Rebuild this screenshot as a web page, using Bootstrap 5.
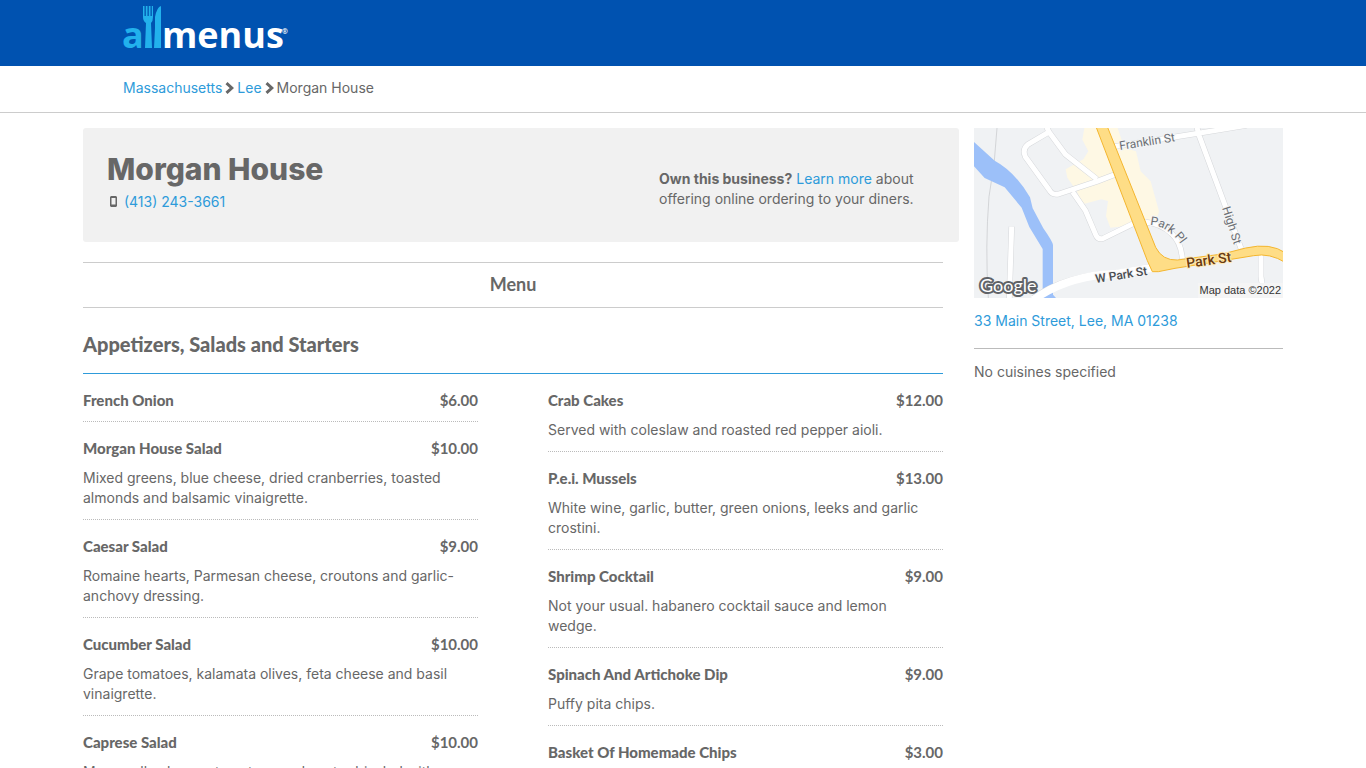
<!DOCTYPE html>
<html lang="en">
<head>
<meta charset="utf-8">
<meta name="viewport" content="width=device-width, initial-scale=1">
<title>Morgan House menu - Lee, MA</title>
<link href="https://cdn.jsdelivr.net/npm/bootstrap@5.3.0/dist/css/bootstrap.min.css" rel="stylesheet">
<style>
  body { font-family: Inter, "Noto Sans", sans-serif; font-size: 14px; line-height: 20px; color: #676767; overflow-x: hidden; }
  a { color: #2e9bda; text-decoration: none; }
  a:hover { text-decoration: underline; }
  .page-wrap { max-width: 1232px; padding: 0 16px; }
  .site-header { background: #0052b0; height: 66px; }
  .inset { padding-left: 40px; }
  .crumb-bar { border-bottom: 1px solid #ccc; padding: 12px 0 14px; }
  .crumb-bar ol { gap: 3px; }
  .page-cols { gap: 15px; padding-top: 15px; }
  .side-col { width: 309px; flex: none; }
  .map-link { margin-bottom: 13px; }
  .hero-box { background: #f1f1f1; border-radius: 3px; padding: 24px 40px 24px 24px; min-height: 114px; }
  .hero-box h1 { font-size: 30px; line-height: 34px; font-weight: 800; margin: 0 0 6px; }
  .owner-note { width: 260px; margin: 17px 0 0; }
  .menu-area { margin-right: 16px; }
  .menu-tab { border: solid #ccc; border-width: 1px 0; margin-top: 20px; height: 46px; font: 700 18px/42px Lato, sans-serif; }
  .section-title { font: 900 20px/28px Lato, sans-serif; margin: 0; padding: 22px 0 15px; border-bottom: 1px solid #2e9bda; }
  .dish-cols { --bs-gutter-x: 70px; }
  .dish { padding: 16px 0 11px; border-bottom: 1px dotted #bbb; }
  .dish h3, .dish .price { font: 900 15px/20px Lato, sans-serif; margin: 0; }
  .dish .price { font-weight: 700; }
  .dish p { margin: 10px 8px 0 0; }
  .side-col hr { margin: 17px 0 13px; border-color: #bbb; opacity: 1; }
</style>
</head>
<body>
<header class="site-header">
  <div class="container-fluid page-wrap">
    <a href="#" class="d-inline-block ms-4 ps-3" aria-label="allmenus home">
      <svg class="d-block" width="170" height="66" viewBox="0 0 170 66" font-family="Open Sans, Noto Sans, sans-serif" font-weight="700">
        <text x="-1" y="48" font-size="36" fill="#22b1ec">a</text>
        <path fill="#22b1ec" d="M20 6h1.500v10h1.300V6h1.700v10h1.300V6h1.700v10h1.300V6H30v11q0 4-2 6l1 25h-7l1-25q-3-2-3-6zM31 48l1-20V17q2-10 6-11v42z"/>
        <text x="39" y="48" font-size="36" fill="#fff">menus</text>
        <text x="159" y="34" font-size="7" fill="#fff">®</text>
      </svg>
    </a>
  </div>
</header>
<nav class="crumb-bar" aria-label="breadcrumb">
  <div class="container-fluid page-wrap">
    <ol class="list-unstyled d-flex align-items-center mb-0 inset">
      <li><a href="#">Massachusetts</a></li>
      <li><svg class="d-block" width="9" height="12" viewBox="0 0 9 12"><path d="M1.500 1.200 6.800 6 1.500 10.800" fill="none" stroke="#676767" stroke-width="3"/></svg></li>
      <li><a href="#">Lee</a></li>
      <li><svg class="d-block" width="9" height="12" viewBox="0 0 9 12"><path d="M1.500 1.200 6.800 6 1.500 10.800" fill="none" stroke="#676767" stroke-width="3"/></svg></li>
      <li>Morgan House</li>
    </ol>
  </div>
</nav>
<div class="container-fluid page-wrap d-flex page-cols">
  <main class="flex-grow-1">
    <section class="hero-box d-flex justify-content-between">
      <div>
        <h1>Morgan House</h1>
        <svg width="13" height="12" viewBox="0 0 13 12" class="align-baseline"><path fill="#676767" fill-rule="evenodd" d="M4 1h5l1 1v9l-1 1H4l-1-1V2zM4.500 3v6.500h4V3z"/></svg>
        <a href="tel:4132433661">(413) 243-3661</a>
      </div>
      <p class="owner-note"><strong class="fw-bold">Own this business?</strong> <a href="#">Learn more</a> about offering online ordering to your diners.</p>
    </section>
    <div class="menu-area">
      <h2 class="menu-tab text-center mb-0">Menu</h2>
      <h2 class="section-title">Appetizers, Salads and Starters</h2>
      <div class="row dish-cols">
        <div class="col-6">
          <article class="dish"><div class="d-flex justify-content-between"><h3>French Onion</h3><span class="price">$6.00</span></div></article>
          <article class="dish"><div class="d-flex justify-content-between"><h3>Morgan House Salad</h3><span class="price">$10.00</span></div><p>Mixed greens, blue cheese, dried cranberries, toasted almonds and balsamic vinaigrette.</p></article>
          <article class="dish"><div class="d-flex justify-content-between"><h3>Caesar Salad</h3><span class="price">$9.00</span></div><p>Romaine hearts, Parmesan cheese, croutons and garlic-anchovy dressing.</p></article>
          <article class="dish"><div class="d-flex justify-content-between"><h3>Cucumber Salad</h3><span class="price">$10.00</span></div><p>Grape tomatoes, kalamata olives, feta cheese and basil vinaigrette.</p></article>
          <article class="dish"><div class="d-flex justify-content-between"><h3>Caprese Salad</h3><span class="price">$10.00</span></div><p>Mozzarella cheese, tomatoes and pesto drizzled with balsamic reduction.</p></article>
        </div>
        <div class="col-6">
          <article class="dish"><div class="d-flex justify-content-between"><h3>Crab Cakes</h3><span class="price">$12.00</span></div><p>Served with coleslaw and roasted red pepper aioli.</p></article>
          <article class="dish"><div class="d-flex justify-content-between"><h3>P.e.i. Mussels</h3><span class="price">$13.00</span></div><p>White wine, garlic, butter, green onions, leeks and garlic crostini.</p></article>
          <article class="dish"><div class="d-flex justify-content-between"><h3>Shrimp Cocktail</h3><span class="price">$9.00</span></div><p>Not your usual. habanero cocktail sauce and lemon wedge.</p></article>
          <article class="dish"><div class="d-flex justify-content-between"><h3>Spinach And Artichoke Dip</h3><span class="price">$9.00</span></div><p>Puffy pita chips.</p></article>
          <article class="dish"><div class="d-flex justify-content-between"><h3>Basket Of Homemade Chips</h3><span class="price">$3.00</span></div></article>
        </div>
      </div>
    </div>
  </main>
  <aside class="side-col">
    <a href="#" class="d-block map-link" aria-label="Map of Morgan House">
      <svg class="d-block" width="309" height="170" viewBox="0 0 309 170" font-family="Roboto, sans-serif" font-size="12">
        <rect width="309" height="170" fill="#f0f2f4"/>
        <svg width="309" height="170" viewBox="12 24 927 510" fill="none" stroke-linejoin="round">
          <path fill="#fef8e4" d="M343 24h100l20 60 35 10 14 60 30 30 25 90-10 36-58 5-78 8-13-35 6-45-20-5-56 15-18-40-28-40-5-25 53-30 15-24-18-35z"/>
          <path stroke="#c4c6c9" stroke-width="2" d="M81 24 Q76 130 57 230 Q45 380 55 534"/>
          <path fill="#9cc0f9" d="M12 66l62 56q60 32 106 110l8 33 32 60q28 40 29 50v149l9 10h-40V387l-40-66-23-58-51-61-60-28-32-35z"/>
          <g stroke="#d5d7da" stroke-width="18">
            <path d="M225 10 237 36l-63 37q-18 15-8 37l72 100q8 16 28 12l115-38 58-22M237 36l49 67 94 74M308 216l38 55 32 75q6 14 22 9l98-48M430 80 685 40 830 16M680 16l5 24 128 345M525 306q50 5 80 35 28 25 32 75M873 400v70q3 25 14 64M125 320l-7 215M190 534q100-70 250-75l110-20"/>
          </g>
          <g stroke="#fff" stroke-width="15">
            <path d="M225 10 237 36l-63 37q-18 15-8 37l72 100q8 16 28 12l115-38 58-22M237 36l49 67 94 74M308 216l38 55 32 75q6 14 22 9l98-48M430 80 685 40 830 16M680 16l5 24 128 345M525 306q50 5 80 35 28 25 32 75M873 400v70q3 25 14 64M125 320l-7 215"/>
            <path stroke-width="24" d="M190 540q100-74 250-79l120-20"/>
          </g>
          <path fill="#fedd86" stroke="#f4b62f" stroke-width="3" d="M378 20h34l145 362q20 40 65 38l135-18 70-18q75-17 120 15v29q-48-30-96-21l-116 19-120 19-50 10h-18l-15-33z"/>
        </svg>
        <g fill="#6b6f74" stroke="#f4f5f6" stroke-width="2" paint-order="stroke" stroke-linejoin="round">
          <text transform="translate(146 22) rotate(-9)">Franklin St</text>
          <text transform="translate(248 80) rotate(72)">High St</text>
          <path id="plCurve" d="M176 97Q196 98 210 121" fill="none" stroke="none"/>
          <text><textPath href="#plCurve">Park Pl</textPath></text>
          <text fill="#4a4d51" font-weight="500" transform="translate(122 155) rotate(-9)">W Park St</text>
          <text fill="#6b3b10" stroke="#fee9b4" font-size="14" font-weight="500" transform="translate(213 140) rotate(-8)">Park St</text>
        </g>
        <rect x="224" y="155" width="85" height="15" fill="#f5f5f5"/>
        <text x="307" y="166" text-anchor="end" font-family="Liberation Sans, sans-serif" font-size="11" fill="#333">Map data ©2022</text>
        <text x="6" y="164" font-family="Lato, sans-serif" font-size="18" font-weight="400" fill="#fff" stroke="#5f6368" stroke-width="4" stroke-linejoin="round" paint-order="stroke">Google</text>
      </svg>
    </a>
    <a href="#">33 Main Street, Lee, MA 01238</a>
    <hr>
    <div>No cuisines specified</div>
  </aside>
</div>
<script src="https://cdn.jsdelivr.net/npm/bootstrap@5.3.0/dist/js/bootstrap.bundle.min.js"></script>
</body>
</html>
